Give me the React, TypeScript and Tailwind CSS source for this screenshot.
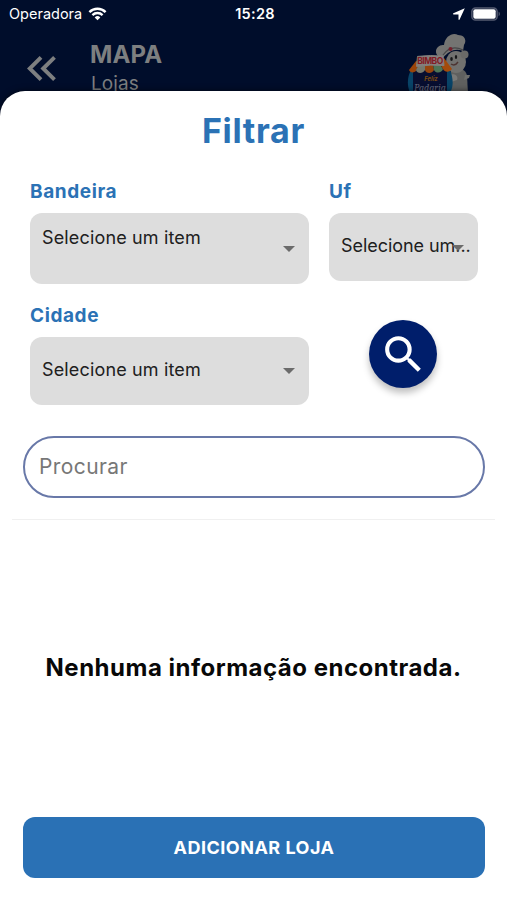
import React from 'react';

type SelectFieldProps = {
  label: string;
  value: string;
  className: string;
  boxClassName: string;
  textClassName: string;
  arrowClassName: string;
};

function StatusBar() {
  return (
    <div className="flex h-7 items-center pl-[9px] pr-[6px] text-white">
      <div className="flex flex-1 items-center gap-[6px]">
        <span className="text-[14.5px] leading-5">Operadora</span>
        <svg className="h-[14px] w-[19px]" viewBox="0 0 18 14" fill="none" stroke="white">
          <path d="M0.9 5.1a11.6 11.6 0 0 1 16.2 0" strokeWidth="2.4" />
          <path d="M3.9 8.1a7.3 7.3 0 0 1 10.2 0" strokeWidth="2.3" />
          <path d="M9 13.2 6.2 10.4a4 4 0 0 1 5.6 0Z" fill="white" stroke="none" />
        </svg>
      </div>
      <span className="text-[14.5px] font-semibold leading-5 tracking-[0.3px]">15:28</span>
      <div className="flex flex-1 items-center justify-end gap-[6px]">
        <svg className="h-3 w-3" viewBox="0 0 12 12" fill="white">
          <path d="M11.8 0.3 0.4 5.2c-.6.3-.5 1.2.2 1.2h4.9v4.9c0 .7.8.9 1.1.2Z" />
        </svg>
        <svg className="h-[14px] w-[30px]" viewBox="0 0 30 14">
          <rect x="0.9" y="0.9" width="25.2" height="12.2" rx="3.6" fill="none" stroke="#555c72" strokeWidth="1.5" />
          <rect x="2.3" y="2.3" width="22.4" height="9.4" rx="1.9" fill="white" />
          <path d="M27.6 4.8c1.6.5 1.6 3.9 0 4.4Z" fill="#555c72" />
        </svg>
      </div>
    </div>
  );
}

function Mascot() {
  return (
    <svg className="mr-[34px] mt-[5px] h-[60px] w-[66px] shrink-0" viewBox="0 0 66 60">
      {/* Baker */}
      <path d="M44 38c6-4 15-3 16 5l1 17H40Z" fill="#5f605f" />
      <path d="M58 42h5l-1 3-5 2Z" fill="#6c6d6b" />
      <ellipse cx="49" cy="29" rx="10" ry="11" fill="#71716f" />
      <circle cx="57.5" cy="21.5" r="4" fill="#6a6a68" />
      <path d="M31 23c-5-5 0-12 6-11C38 3 46-1 51 2c7 0 9 6 6 10l-1 6c-8-3-14 0-20 7Z" fill="#747472" />
      <path d="M36 22c5-7 12-9 20-5" fill="none" stroke="#454648" strokeWidth="1.2" />
      <circle cx="43.5" cy="16" r="2" fill="#75202c" />
      <ellipse cx="44.5" cy="26" rx="1.3" ry="2" fill="#171719" />
      <ellipse cx="49" cy="24" rx="1.2" ry="2.1" fill="#171719" />
      <path d="M44 31c3 2 5 1 7-2" fill="none" stroke="#4c3432" strokeWidth="1.4" />
      <path d="M41 43c5-4 11-1 9 4l-9 3Z" fill="#797977" />
      {/* Stand */}
      <path d="M4 37c-4 7-4 16-1 23h40c4-7 3-16 0-23Z" fill="#084367" />
      <path d="M6 37h34v23H6Z" fill="#080e30" />
      <path d="M9 28 2 37c1 3 5 3 7 1l4-9Z" fill="#9a440a" />
      <path d="M12 31 9 37c1 4 7 4 9 0v-6Z" fill="#77796d" />
      <path d="M18 31v6c1 4 7 4 9 0l-1-6Z" fill="#96450d" />
      <path d="M26 31l1 6c2 4 8 3 9-1l-4-6Z" fill="#4e7557" />
      <path d="M32 29l4 7c2 4 7 3 9 0l-8-11Z" fill="#a34b0c" />
      <path d="M10.5 23.4q13-1.6 25.5-.2l1 9.4q-13-1.4-27.5.8Z" fill="#837f7d" stroke="#837f7d" strokeLinejoin="round" />
      <text x="23.2" y="31" textAnchor="middle" className="text-[8.5px] font-bold" fill="#821b24" textLength="26">BIMBO</text>
      <text x="24" y="48" textAnchor="middle" className="text-[6px] font-bold italic" fill="#7b4b12">Feliz</text>
      <text x="23" y="58" textAnchor="middle" className="font-serif text-[10px] italic" fill="#606376">Padaria</text>
    </svg>
  );
}

function Arrow({ className }: { className: string }) {
  return (
    <svg className={`absolute h-[6px] w-3 ${className}`} viewBox="0 0 12 6" fill="#6b6b6b">
      <path d="M0 0h12L6 6Z" />
    </svg>
  );
}

function SelectField({ label, value, className, boxClassName, textClassName, arrowClassName }: SelectFieldProps) {
  return (
    <div className={className}>
      <label className="block text-[19px] font-bold leading-6 tracking-[0.6px] text-[#2b72b5]">{label}</label>
      <div className={`relative mt-[9px] flex rounded-xl bg-[#dddddd] pl-3 ${boxClassName}`}>
        <span className={`whitespace-nowrap text-[18px] leading-6 text-[#202020] ${textClassName}`}>{value}</span>
        <Arrow className={arrowClassName} />
      </div>
    </div>
  );
}

export default function App() {
  return (
    <div className="flex h-[900px] w-[507px] flex-col overflow-hidden bg-[#000d2b] font-['Inter',sans-serif]">
      {/* Header */}
      <header className="h-[91px] shrink-0 overflow-hidden">
        <StatusBar />
        <div className="flex items-start">
          <svg className="ml-[27px] mt-[28px] h-[25px] w-[29px]" viewBox="0 0 29 25" fill="none" stroke="#7d7f80" strokeWidth="3.9">
            <path d="M14 1.4 2.7 12.5 14 23.6M27.5 1.4 16.2 12.5 27.5 23.6" />
          </svg>
          <div className="ml-[34px] mt-[13px] flex-1 text-[#7d7f80]">
            <h2 className="text-[24px] font-bold leading-7 tracking-[0.1px]">MAPA</h2>
            <p className="ml-[1px] mt-[3px] text-[19px] leading-6 tracking-[0.1px]">Lojas</p>
          </div>
          <Mascot />
        </div>
      </header>

      {/* Filter sheet */}
      <main className="flex flex-1 flex-col rounded-t-[25px] bg-white shadow-[0_0_6px_rgba(0,0,0,0.6)]">
        <h1 className="mt-5 text-center text-[34px] font-bold leading-10 tracking-[0.7px] text-[#2b72b5]">Filtrar</h1>

        <section className="mt-[29px] flex gap-5 pl-[30px]">
          <SelectField
            label="Bandeira"
            value="Selecione um item"
            className="w-[279px]"
            boxClassName="h-[71px] pt-[13px]"
            textClassName="tracking-[0.15px]"
            arrowClassName="right-[14px] top-[33px]"
          />
          <SelectField
            label="Uf"
            value="Selecione um..."
            className="w-[149px]"
            boxClassName="h-[68px] pt-[21px]"
            textClassName="tracking-[-0.05px]"
            arrowClassName="right-[14px] top-[32px]"
          />
        </section>

        <section className="mt-5 flex pl-[30px]">
          <SelectField
            label="Cidade"
            value="Selecione um item"
            className="w-[279px]"
            boxClassName="h-[68px] pt-[21px]"
            textClassName="tracking-[0.15px]"
            arrowClassName="right-[14px] top-[31px]"
          />
          <button className="ml-[60px] mt-4 flex h-[68px] w-[68px] items-center justify-center rounded-full bg-[#001e6b] shadow-[0_5px_7px_rgba(0,0,0,0.25)]">
            <svg className="h-[49px] w-[49px]" viewBox="0 0 24 24" fill="white">
              <path d="M15.5 14h-.79l-.28-.27A6.47 6.47 0 0 0 16 9.5 6.5 6.5 0 1 0 9.5 16c1.61 0 3.09-.59 4.23-1.57l.27.28v.79l5 4.99L20.49 19l-4.99-5zm-6 0C7.01 14 5 11.99 5 9.5S7.01 5 9.5 5 14 7.01 14 9.5 11.99 14 9.5 14z" />
            </svg>
          </button>
        </section>

        <input
          className="ml-[23px] mr-[22px] mt-[31px] h-[62px] rounded-full border-2 border-[#6878a8] px-[14px] pb-[2px] text-[21px] tracking-[0.4px] outline-none placeholder:text-[#777777]"
          placeholder="Procurar"
        />
        <hr className="mx-3 mt-[21px] border-[#f0f0f0]" />

        <div className="flex flex-1 items-center justify-center pb-[2px]">
          <p className="whitespace-nowrap text-[24px] font-bold tracking-[0.5px] text-[#080808]">Nenhuma informação encontrada.</p>
        </div>

        <button className="mb-[22px] ml-[23px] mr-[22px] h-[61px] rounded-xl bg-[#2a71b5] text-[18px] font-bold tracking-[0.5px] text-white">
          ADICIONAR LOJA
        </button>
      </main>
    </div>
  );
}
